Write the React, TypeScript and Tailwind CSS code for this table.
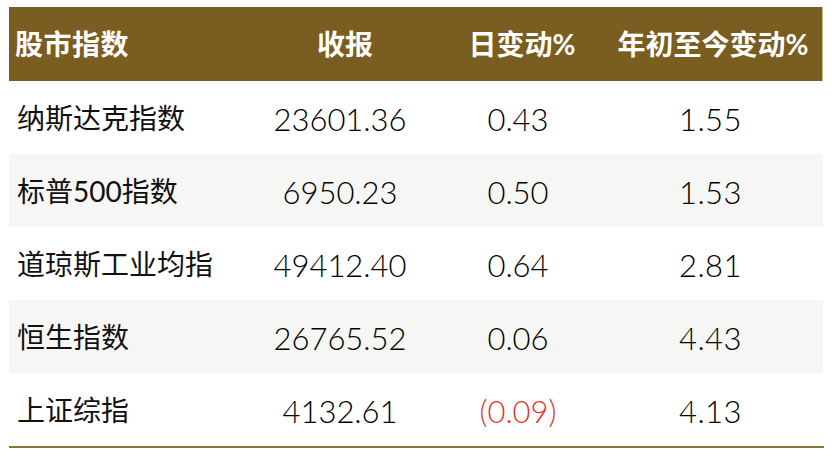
const rows = [
  { name: "纳斯达克指数", close: "23601.36", day: "0.43", ytd: "1.55" },
  { name: "标普500指数", close: "6950.23", day: "0.50", ytd: "1.53" },
  { name: "道琼斯工业均指", close: "49412.40", day: "0.64", ytd: "2.81" },
  { name: "恒生指数", close: "26765.52", day: "0.06", ytd: "4.43" },
  { name: "上证综指", close: "4132.61", day: "(0.09)", ytd: "4.13", neg: true },
];

const cols = "grid grid-cols-[243px_184px_176px_1fr]";
const font = { fontFamily: '"Lato", "Noto Sans CJK SC", sans-serif' };

export default function App() {
  return (
    <div className="w-[832px] h-[464px] bg-white pt-[7px] px-[9px]" style={font}>
      <div className="w-[814px]">
        {/* header band */}
        <div className={`${cols} h-[74px] bg-[#7a5d20] border-r border-[#c9b98f] text-white text-[28px] font-bold items-center`}>
          <div className="pl-[6px] tracking-[0.5px]">股市指数</div>
          <div className="text-center pl-[2px]">收报</div>
          <div className="text-center pr-[4px]">日变动%</div>
          <div className="text-center pr-[8px]">年初至今变动%</div>
        </div>

        {rows.map((r, i) => (
          <div
            key={r.name}
            className={`${cols} h-[73px] items-center text-black ${i % 2 === 1 ? "bg-[#f6f6f4]" : "bg-white"}`}
          >
            <div className="pl-[8px] text-[28px] text-[#111]">{r.name}</div>
            <div className="text-center pr-[8px] text-[31px] font-light pt-[3px]">{r.close}</div>
            <div className={`text-center pr-[12px] text-[31px] font-light pt-[3px] ${r.neg ? "text-[#e8342a]" : ""}`}>{r.day}</div>
            <div className="text-center pr-[14px] text-[31px] font-light pt-[3px] tracking-[0.5px]">{r.ytd}</div>
          </div>
        ))}

        <div className="h-[2px] bg-[#8b7437] w-[815px]" />
      </div>
    </div>
  );
}
